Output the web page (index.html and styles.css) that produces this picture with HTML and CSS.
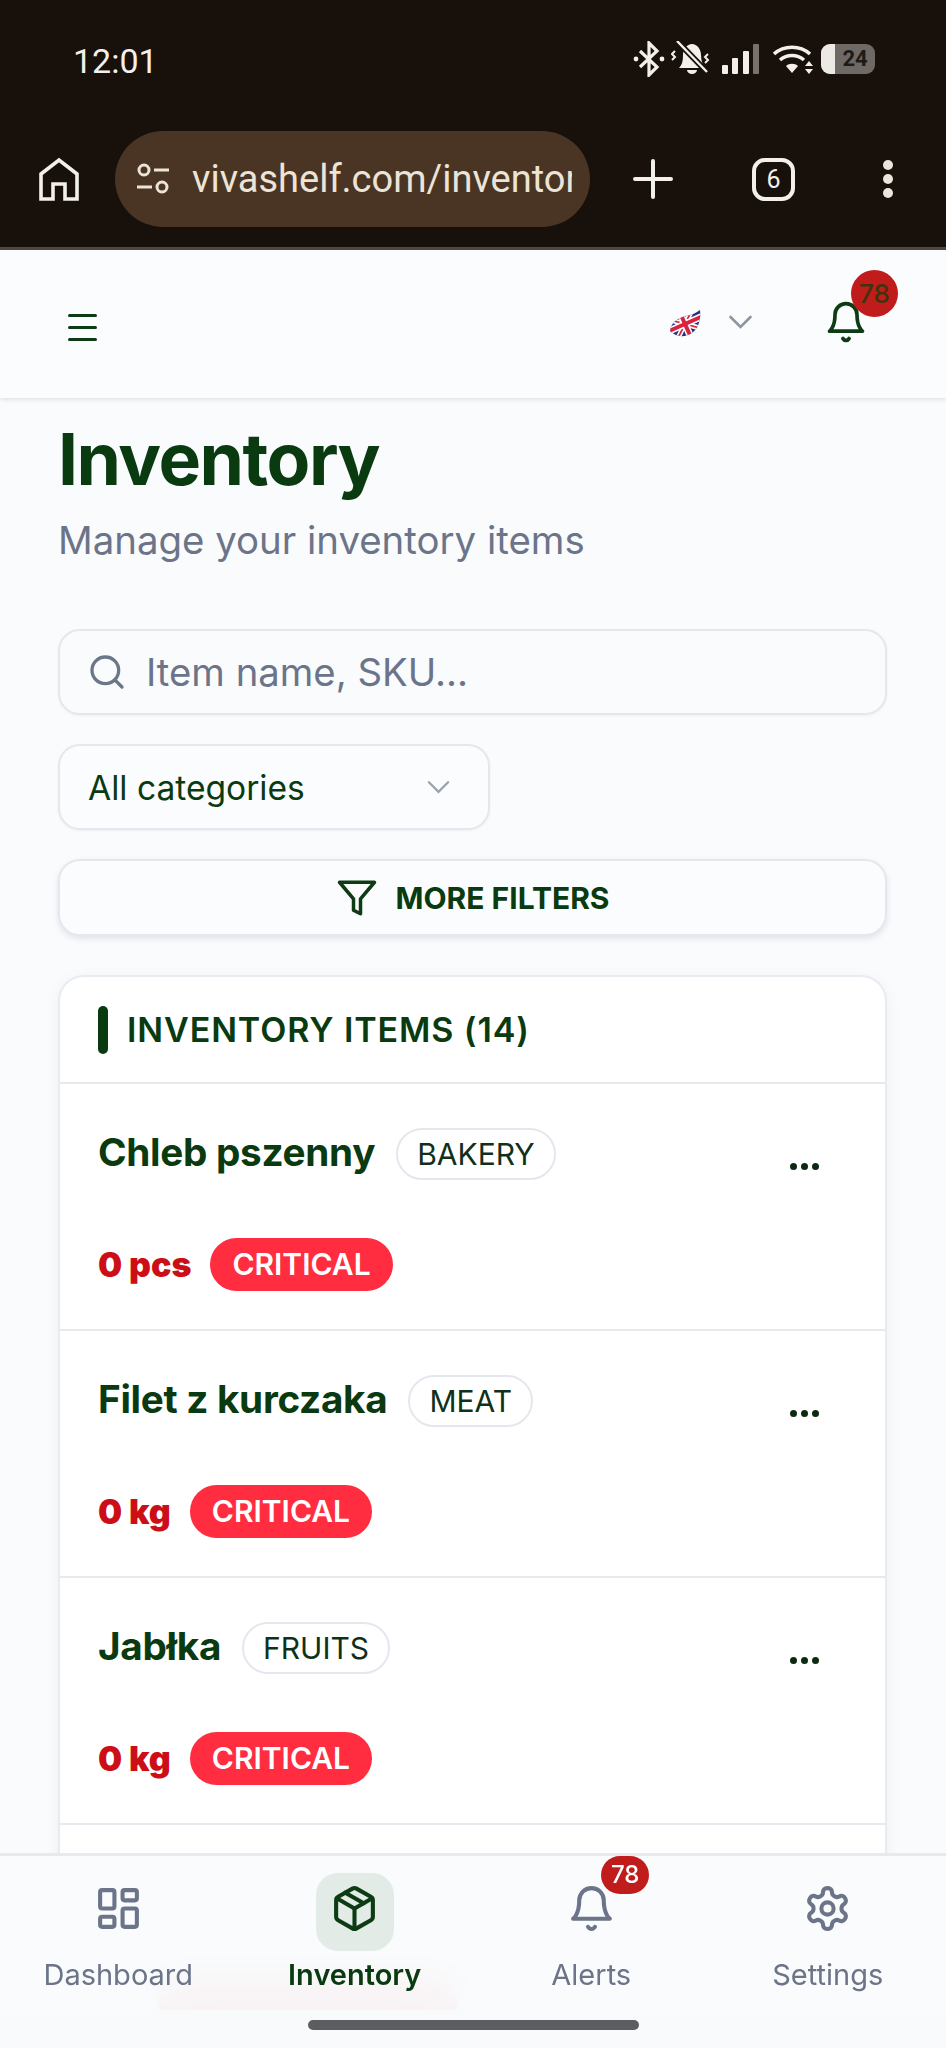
FILE: index.html
```html
<!DOCTYPE html>
<html lang="en">
<head>
    <meta charset="UTF-8">
    <meta name="viewport" content="width=device-width, initial-scale=1.0">
    <title>Inventory</title>
    <link rel="stylesheet" href="styles.css">
</head>
<body>
    <div class="phone">
        <!-- Browser chrome -->
        <div class="chrome">
            <div class="status-bar">
                <span class="clock">12:01</span>
                <div class="status-icons">
                    <svg class="st-bt" viewBox="0 0 32 36" fill="none" stroke="#f3efe9" stroke-width="3.2"><path d="M7 10l17 16-8 8V2l8 8L7 26"/><circle cx="3" cy="18" r="2.4" fill="#f3efe9" stroke="none"/><circle cx="29" cy="18" r="2.4" fill="#f3efe9" stroke="none"/></svg>
                    <svg class="st-mute" viewBox="0 0 40 36" fill="none"><path d="M8 27c3-3 4-7 4-13 0-6 4-11 9-11s9 5 9 11c0 6 2 10 4 13z" fill="#f3efe9"/><path d="M16 29h10a5 4 0 0 1-10 0z" fill="#f3efe9"/><path d="M6 0l30 31" stroke="#17100b" stroke-width="6"/><path d="M6 0l30 31" stroke="#f3efe9" stroke-width="2.4"/><path d="M4 10l-3 3 3 3-3 3M37 13l-3 3 3 3-3 3" stroke="#f3efe9" stroke-width="2"/></svg>
                    <svg class="st-signal" viewBox="0 0 38 30"><rect x="0" y="21" width="6" height="9" rx="1" fill="#f3efe9"/><rect x="10" y="14" width="6" height="16" rx="1" fill="#f3efe9"/><rect x="21" y="7" width="6" height="23" rx="1" fill="#f3efe9"/><rect x="31" y="0" width="6" height="30" rx="1" fill="#77716b"/></svg>
                    <svg class="st-wifi" viewBox="0 0 42 30" fill="none" stroke="#f3efe9" stroke-width="3.6"><path d="M2 10C12 1 28 1 38 10"/><path d="M8 16c7-6 17-6 24 0"/><path d="M14 22l6 7 6-7c-3-3-9-3-12 0z" fill="#f3efe9" stroke="none"/><path d="M37 17l-4 5h8zM37 30l-4-5h8z" fill="#f3efe9" stroke="none"/></svg>
                    <div class="battery"><span class="battery-fill"></span><span class="battery-level">24</span></div>
                </div>
            </div>
            <div class="browser-bar">
                <svg class="br-home" viewBox="0 0 42 44" fill="none" stroke="#f3efe9" stroke-width="3.6"><path d="M3 42V17L21 3l18 14v25H27V27H15v15z"/></svg>
                <div class="url-pill">
                    <svg class="url-tune" viewBox="0 0 36 36" fill="none" stroke="#ede4d8" stroke-width="3"><circle cx="9" cy="9" r="5"/><path d="M19 9h15M2 26h15"/><circle cx="27" cy="26" r="5"/></svg>
                    <span class="url-text">vivashelf.com/inventory</span>
                </div>
                <svg class="br-plus" viewBox="0 0 40 40" stroke="#f3efe9" stroke-width="4" stroke-linecap="round"><path d="M20 2v36M2 20h36"/></svg>
                <div class="tab-count">6</div>
                <div class="br-menu"><i></i><i></i><i></i></div>
            </div>
        </div>

        <!-- App header -->
        <header class="app-header">
            <div class="burger"><i></i><i></i><i></i></div>
            <div class="header-right">
                <svg class="flag" viewBox="0 0 32 28">
                    <defs>
                        <clipPath id="leaf"><path d="M1 21C2 12 9 8 17 6c6-1 10-3 14-6 1 9-1 18-8 23-6 4-15 5-22-2z"/></clipPath>
                    </defs>
                    <g clip-path="url(#leaf)">
                        <g transform="rotate(-24 16 14)">
                            <rect x="-6" y="-4" width="44" height="36" fill="#27337d"/>
                            <path d="M-6-4l44 36M38-4L-6 32" stroke="#fff" stroke-width="5"/>
                            <path d="M-6-4l44 36M38-4L-6 32" stroke="#d8243f" stroke-width="1.8"/>
                            <path d="M16-4v36M-6 14h44" stroke="#fff" stroke-width="7"/>
                            <path d="M16-4v36M-6 14h44" stroke="#d8243f" stroke-width="4"/>
                        </g>
                    </g>
                </svg>
                <svg class="lang-chevron" viewBox="0 0 24 14" fill="none" stroke="#8b95a3" stroke-width="2.6" stroke-linecap="round"><path d="M2 2l10 10L22 2"/></svg>
                <div class="bell-wrap">
                    <svg class="icon-bell" viewBox="0 0 24 24" fill="none" stroke="#0c3b14" stroke-width="2" stroke-linecap="round" stroke-linejoin="round"><path d="M6 8a6 6 0 0 1 12 0c0 7 3 9 3 9H3s3-2 3-9"/><path d="M10.3 21a1.94 1.94 0 0 0 3.4 0"/></svg>
                    <span class="bell-badge">78</span>
                </div>
            </div>
        </header>

        <main class="content">
            <h1 class="page-title">Inventory</h1>
            <p class="page-sub">Manage your inventory items</p>

            <div class="search-box">
                <svg class="search-icon" viewBox="0 0 24 24" fill="none" stroke="#6b7789" stroke-width="2" stroke-linecap="round"><circle cx="11" cy="11" r="8"/><path d="m21 21-4.3-4.3"/></svg>
                <span>Item name, SKU...</span>
            </div>

            <div class="select-box">
                <span>All categories</span>
                <svg class="select-chevron" viewBox="0 0 24 14" fill="none" stroke="#98a2b0" stroke-width="2.4" stroke-linecap="round"><path d="M2 2l10 10L22 2"/></svg>
            </div>

            <div class="filters-btn">
                <svg class="filter-icon" viewBox="0 0 24 24" fill="none" stroke="#0c3b14" stroke-width="2" stroke-linejoin="round"><path d="M22 3H2l8 9.46V19l4 2v-8.54z"/></svg>
                <span>MORE FILTERS</span>
            </div>

            <section class="items-card">
                <div class="card-head">
                    <span class="head-bar"></span>
                    <h2>INVENTORY ITEMS (14)</h2>
                </div>

                <div class="item-row">
                    <div class="item-top">
                        <span class="item-name">Chleb pszenny</span>
                        <span class="item-tag">BAKERY</span>
                        <span class="item-more"><i></i><i></i><i></i></span>
                    </div>
                    <div class="item-stock">
                        <span class="qty">0 pcs</span>
                        <span class="critical">CRITICAL</span>
                    </div>
                </div>
                <div class="item-row">
                    <div class="item-top">
                        <span class="item-name">Filet z kurczaka</span>
                        <span class="item-tag">MEAT</span>
                        <span class="item-more"><i></i><i></i><i></i></span>
                    </div>
                    <div class="item-stock">
                        <span class="qty">0 kg</span>
                        <span class="critical">CRITICAL</span>
                    </div>
                </div>
                <div class="item-row">
                    <div class="item-top">
                        <span class="item-name">Jabłka</span>
                        <span class="item-tag">FRUITS</span>
                        <span class="item-more"><i></i><i></i><i></i></span>
                    </div>
                    <div class="item-stock">
                        <span class="qty">0 kg</span>
                        <span class="critical">CRITICAL</span>
                    </div>
                </div>
                <!-- this row sits behind the nav, only the red pill shows through the blur -->
                <div class="item-row">
                    <div class="item-top"></div>
                    <div class="item-stock">
                        <span class="critical critical-blank"></span>
                    </div>
                </div>
            </section>
        </main>

        <!-- Bottom nav -->
        <nav class="bottom-nav">
            <div class="nav-items">
                <div class="nav-item">
                    <span class="nav-icon">
                        <svg viewBox="0 0 24 24" fill="none" stroke="#6b7489" stroke-width="2" stroke-linecap="round" stroke-linejoin="round"><rect width="7" height="9" x="3" y="3" rx="1"/><rect width="7" height="5" x="14" y="3" rx="1"/><rect width="7" height="9" x="14" y="12" rx="1"/><rect width="7" height="5" x="3" y="16" rx="1"/></svg>
                    </span>
                    <span class="nav-label">Dashboard</span>
                </div>
                <div class="nav-item active">
                    <span class="nav-icon">
                        <svg viewBox="0 0 24 24" fill="none" stroke="#0c3b14" stroke-width="2" stroke-linecap="round" stroke-linejoin="round"><path d="M11 21.73a2 2 0 0 0 2 0l7-4A2 2 0 0 0 21 16V8a2 2 0 0 0-1-1.73l-7-4a2 2 0 0 0-2 0l-7 4A2 2 0 0 0 3 8v8a2 2 0 0 0 1 1.73z"/><path d="M12 22V12"/><path d="m3.3 7 8.7 5 8.7-5"/><path d="m7.5 4.27 9 5.15"/></svg>
                    </span>
                    <span class="nav-label">Inventory</span>
                </div>
                <div class="nav-item">
                    <span class="nav-icon">
                        <svg viewBox="0 0 24 24" fill="none" stroke="#6b7489" stroke-width="2" stroke-linecap="round" stroke-linejoin="round"><path d="M6 8a6 6 0 0 1 12 0c0 7 3 9 3 9H3s3-2 3-9"/><path d="M10.3 21a1.94 1.94 0 0 0 3.4 0"/></svg>
                        <span class="nav-badge">78</span>
                    </span>
                    <span class="nav-label">Alerts</span>
                </div>
                <div class="nav-item">
                    <span class="nav-icon">
                        <svg viewBox="0 0 24 24" fill="none" stroke="#6b7489" stroke-width="2" stroke-linecap="round" stroke-linejoin="round"><path d="M12.22 2h-.44a2 2 0 0 0-2 2v.18a2 2 0 0 1-1 1.73l-.43.25a2 2 0 0 1-2 0l-.15-.08a2 2 0 0 0-2.73.73l-.22.38a2 2 0 0 0 .73 2.73l.15.1a2 2 0 0 1 1 1.72v.51a2 2 0 0 1-1 1.74l-.15.09a2 2 0 0 0-.73 2.73l.22.38a2 2 0 0 0 2.73.73l.15-.08a2 2 0 0 1 2 0l.43.25a2 2 0 0 1 1 1.73V20a2 2 0 0 0 2 2h.44a2 2 0 0 0 2-2v-.18a2 2 0 0 1 1-1.73l.43-.25a2 2 0 0 1 2 0l.15.08a2 2 0 0 0 2.73-.73l.22-.39a2 2 0 0 0-.73-2.73l-.15-.08a2 2 0 0 1-1-1.74v-.5a2 2 0 0 1 1-1.74l.15-.09a2 2 0 0 0 .73-2.73l-.22-.38a2 2 0 0 0-2.73-.73l-.15.08a2 2 0 0 1-2 0l-.43-.25a2 2 0 0 1-1-1.73V4a2 2 0 0 0-2-2z"/><circle cx="12" cy="12" r="3"/></svg>
                    </span>
                    <span class="nav-label">Settings</span>
                </div>
            </div>
            <div class="gesture-area"><span class="gesture-bar"></span></div>
        </nav>
    </div>
</body>
</html>
```

FILE: styles.css
```css
* {
    box-sizing: border-box;
}

html, body {
    margin: 0;
    padding: 0;
}

body {
    font-family: "Inter", "Noto Sans", sans-serif;
    background: #fafbfd;
}

.phone {
    position: relative;
    width: 946px;
    height: 2048px;
    overflow: hidden;
    display: flex;
    flex-direction: column;
    background: #fafbfd;
}

/* browser chrome */
.chrome {
    flex: none;
    height: 250px;
    background: #17100b;
    border-bottom: 3px solid #4e4841;
    color: #f3efe9;
    font-family: "Roboto", sans-serif;
}

.status-bar {
    height: 131px;
    padding: 42px 0 0 73px;
    display: flex;
    justify-content: space-between;
    align-items: flex-start;
}

.clock {
    font-size: 34px;
    line-height: 38px;
}

.status-icons {
    display: flex;
    align-items: center;
    gap: 6px;
    padding-right: 71px;
    height: 34px;
}

.st-bt { width: 32px; height: 36px; }
.st-mute { width: 40px; height: 36px; }
.st-signal { width: 38px; height: 30px; margin-left: 5px; }
.st-wifi { width: 42px; height: 30px; margin-left: 6px; }

.battery {
    position: relative;
    width: 54px;
    height: 30px;
    background: #6e6964;
    border-radius: 9px;
    overflow: hidden;
    margin-left: 1px;
}

.battery-fill {
    display: block;
    width: 14px;
    height: 30px;
    background: #ece9e5;
}

.battery-level {
    position: absolute;
    top: 0;
    left: 14px;
    right: 0;
    text-align: center;
    font-size: 22px;
    font-weight: 700;
    line-height: 30px;
    color: #1d1a17;
}

.browser-bar {
    display: flex;
    align-items: center;
    height: 96px;
    padding-left: 38px;
}

.br-home {
    width: 42px;
    height: 44px;
    flex: none;
}

.url-pill {
    flex: none;
    width: 475px;
    height: 96px;
    margin-left: 35px;
    padding: 0 18px 0 20px;
    display: flex;
    align-items: center;
    gap: 21px;
    background: #4a3524;
    border-radius: 48px;
}

.url-tune {
    flex: none;
    width: 36px;
    height: 36px;
}

.url-text {
    flex: 1;
    overflow: hidden;
    white-space: nowrap;
    font-size: 38px;
    color: #ede4d8;
}

.br-plus {
    width: 40px;
    height: 40px;
    flex: none;
    margin-left: 43px;
}

.tab-count {
    flex: none;
    width: 43px;
    height: 43px;
    margin-left: 79px;
    border: 4px solid #f3efe9;
    border-radius: 13px;
    font-size: 25px;
    line-height: 35px;
    text-align: center;
}

.br-menu {
    flex: none;
    margin-left: 88px;
    display: flex;
    flex-direction: column;
    gap: 4px;
}

.br-menu i {
    display: block;
    width: 10px;
    height: 10px;
    border-radius: 50%;
    background: #ebe5dc;
}

/* app header */
.app-header {
    position: relative;
    flex: none;
    height: 148px;
    display: flex;
    justify-content: space-between;
    align-items: center;
    padding: 0 74px 0 68px;
    background: #fbfcfe;
    box-shadow: 0 2px 4px rgba(15, 23, 42, 0.1);
    z-index: 2;
}

.burger {
    display: flex;
    flex-direction: column;
    gap: 9px;
    margin-top: 6px;
}

.burger i {
    display: block;
    width: 29px;
    height: 3px;
    background: #0c3b14;
    border-radius: 2px;
}

.header-right {
    display: flex;
    align-items: center;
}

.flag {
    width: 32px;
    height: 28px;
    margin-top: 0;
}

.lang-chevron {
    width: 25px;
    height: 14px;
    margin-left: 27px;
    margin-top: -5px;
}

.bell-wrap {
    position: relative;
    width: 48px;
    height: 48px;
    margin-left: 71px;
}

.icon-bell {
    display: block;
    width: 44px;
    height: 44px;
}

.bell-badge {
    position: absolute;
    top: -30px;
    left: 27px;
    width: 47px;
    height: 47px;
    border-radius: 50%;
    background: #c01c1c;
    color: #43320a;
    font-size: 26px;
    font-weight: 500;
    line-height: 47px;
    text-align: center;
}

/* page */
.content {
    flex: 1;
    min-height: 0;
    padding: 19px 59px 0 58px;
}

.page-title {
    margin: 0;
    font-size: 71.5px;
    font-weight: 700;
    line-height: 84px;
    letter-spacing: -1.5px;
    color: #0a3a10;
}

.page-sub {
    margin: 12px 0 0;
    font-size: 38.4px;
    line-height: 54px;
    color: #6b7489;
}

.search-box {
    display: flex;
    align-items: center;
    height: 86px;
    margin-top: 62px;
    padding: 0 0 0 27px;
    gap: 19px;
    background: #f9fbfd;
    border: 2px solid #e4e8ee;
    border-radius: 22px;
    font-size: 38.3px;
    color: #6b7489;
    box-shadow: 0 1px 3px rgba(15, 23, 42, 0.05);
}

.search-icon {
    width: 40px;
    height: 40px;
    flex: none;
}

.select-box {
    display: flex;
    justify-content: space-between;
    align-items: center;
    width: 432px;
    height: 86px;
    margin-top: 29px;
    padding: 0 38px 0 28px;
    background: #fbfcfe;
    border: 2px solid #e4e8ee;
    border-radius: 22px;
    font-size: 33.6px;
    color: #0a3a10;
    box-shadow: 0 1px 3px rgba(15, 23, 42, 0.05);
}

.select-chevron {
    width: 23px;
    height: 14px;
}

.filters-btn {
    display: flex;
    justify-content: center;
    align-items: center;
    gap: 18px;
    height: 77px;
    margin-top: 29px;
    background: #fbfcfe;
    border: 2px solid #e4e8ee;
    border-radius: 22px;
    font-size: 30px;
    font-weight: 700;
    color: #0a3a10;
    box-shadow: 0 3px 6px rgba(15, 23, 42, 0.1);
}

.filter-icon {
    width: 42px;
    height: 42px;
}

/* inventory card */
.items-card {
    margin-top: 39px;
    background: #fff;
    border: 2px solid #e8ecf1;
    border-bottom: 0;
    border-radius: 26px 26px 0 0;
    box-shadow: 0 4px 16px rgba(15, 23, 42, 0.05);
}

.card-head {
    display: flex;
    align-items: center;
    gap: 19px;
    height: 107px;
    padding: 0 0 0 38px;
    border-bottom: 2px solid #e6e9ee;
}

.head-bar {
    width: 10px;
    height: 48px;
    border-radius: 5px;
    background: #0a3a10;
}

.card-head h2 {
    margin: 0;
    font-size: 34px;
    font-weight: 600;
    letter-spacing: 0.9px;
    color: #0a3a10;
}

.item-row {
    height: 247px;
    padding: 42px 0 0 38px;
    border-bottom: 2px solid #e6e9ee;
}

.item-top {
    display: flex;
    align-items: center;
    height: 52px;
}

.item-name {
    font-size: 38.7px;
    font-weight: 700;
    letter-spacing: -0.3px;
    color: #0a3a10;
}

.item-tag {
    margin: 4px 0 0 21px;
    padding: 0 19px;
    height: 52px;
    border: 2px solid #e4e8ee;
    border-radius: 26px;
    font-size: 30px;
    line-height: 48px;
    color: #10301a;
}

.item-more {
    position: relative;
    top: 14px;
    margin-left: auto;
    margin-right: 66px;
    display: flex;
    gap: 4px;
}

.item-more i {
    display: block;
    width: 7px;
    height: 7px;
    border-radius: 50%;
    background: #0c2a12;
}

.item-stock {
    display: flex;
    align-items: center;
    gap: 19px;
    height: 53px;
    margin-top: 60px;
}

.qty {
    font-size: 34px;
    font-weight: 900;
    color: #cc0f17;
}

.critical {
    padding: 0 22px;
    height: 53px;
    border-radius: 27px;
    background: #ff2d3f;
    font-size: 30px;
    font-weight: 600;
    line-height: 53px;
    color: #fff;
}

.critical-blank {
    width: 300px;
    margin-left: 60px;
}

/* bottom nav */
.bottom-nav {
    position: absolute;
    left: 0;
    right: 0;
    bottom: 0;
    z-index: 3;
}

.nav-items {
    display: grid;
    grid-template-columns: repeat(4, 1fr);
    height: 157px;
    padding-top: 17px;
    background: rgba(249, 251, 252, 0.96);
    backdrop-filter: blur(20px);
    border-top: 3px solid #e6e9ee;
}

.nav-item {
    display: flex;
    flex-direction: column;
    align-items: center;
    gap: 4px;
    color: #6b7489;
}

.nav-icon {
    position: relative;
    display: flex;
    justify-content: center;
    align-items: center;
    width: 78px;
    height: 78px;
    border-radius: 22px;
}

.nav-icon svg {
    width: 49px;
    height: 49px;
    margin-bottom: 8px;
}

.nav-item.active .nav-icon {
    background: #e3ebe6;
}

.nav-item.active .nav-label {
    font-weight: 600;
    color: #0a3a10;
}

.nav-label {
    font-size: 29px;
    line-height: 40px;
}

.nav-badge {
    position: absolute;
    top: -17px;
    left: 49px;
    width: 48px;
    height: 38px;
    border-radius: 19px;
    background: #c01c1c;
    color: #fff;
    font-size: 24px;
    font-weight: 500;
    line-height: 38px;
    text-align: center;
}

.gesture-area {
    height: 38px;
    padding-top: 10px;
    display: flex;
    justify-content: center;
    background: #f8fafc;
}

.gesture-bar {
    width: 331px;
    height: 10px;
    border-radius: 5px;
    background: #5b5d60;
}
```
